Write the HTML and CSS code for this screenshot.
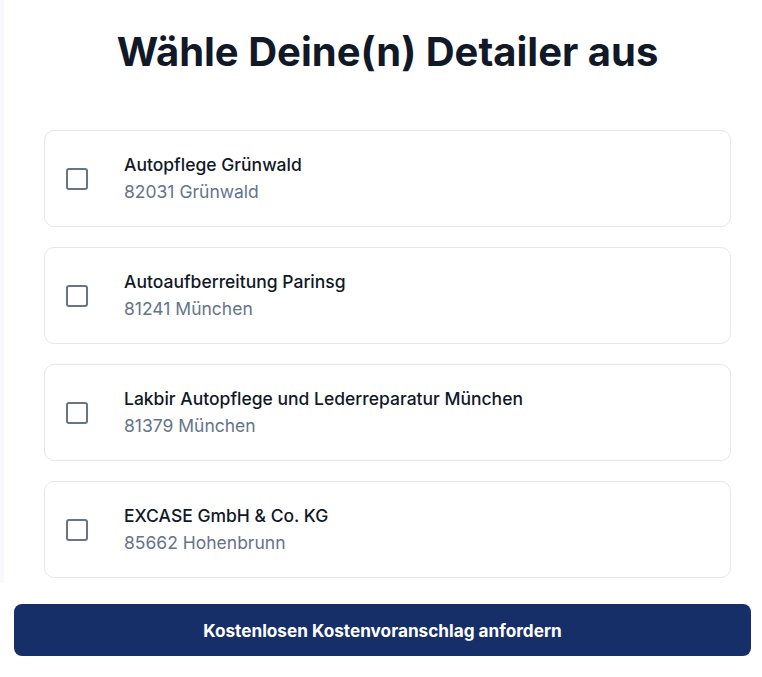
FILE: index.html
```html
<!DOCTYPE html>
<html lang="de">
<head>
<meta charset="utf-8">
<link rel="stylesheet" href="styles.css">
</head>
<body>
<div class="page">
  <div class="scroll">
    <div class="content">
      <h1 class="title">Wähle Deine(n) Detailer aus</h1>
      <div class="list">
        <label class="card">
          <span class="box"></span>
          <span class="info">
            <span class="name">Autopflege Grünwald</span>
            <span class="place">82031 Grünwald</span>
          </span>
        </label>
        <label class="card">
          <span class="box"></span>
          <span class="info">
            <span class="name">Autoaufberreitung Parinsg</span>
            <span class="place">81241 München</span>
          </span>
        </label>
        <label class="card">
          <span class="box"></span>
          <span class="info">
            <span class="name">Lakbir Autopflege und Lederreparatur München</span>
            <span class="place">81379 München</span>
          </span>
        </label>
        <label class="card">
          <span class="box"></span>
          <span class="info">
            <span class="name">EXCASE GmbH &amp; Co. KG</span>
            <span class="place">85662 Hohenbrunn</span>
          </span>
        </label>
      </div>
    </div>
  </div>
  <div class="footer">
    <button class="cta">Kostenlosen Kostenvoranschlag anfordern</button>
  </div>
</div>
</body>
</html>
```
FILE: styles.css
```css
* { box-sizing: border-box; }
html, body {
  margin: 0;
  padding: 0;
  background: #ffffff;
  font-family: Inter, "Noto Sans", sans-serif;
}
.page {
  width: 762px;
  height: 677px;
  display: flex;
  flex-direction: column;
}
.scroll {
  height: 583px;
  border-left: 4px solid #f8f9fc;
  overflow: hidden;
}
.content {
  padding: 0 31px 0 40px;
}
.title {
  margin: 0;
  padding-top: 27px;
  height: 130px;
  font-size: 40px;
  line-height: 50px;
  font-weight: 700;
  color: #111827;
  text-align: center;
}
.list {
  display: flex;
  flex-direction: column;
  gap: 20px;
}
.card {
  display: flex;
  align-items: center;
  height: 97px;
  border: 1px solid #e5e7eb;
  border-radius: 10px;
  padding: 0 21px;
  background: #fff;
}
.box {
  width: 22px;
  height: 22px;
  border: 2px solid #677489;
  border-radius: 3px;
  flex: none;
}
.info {
  display: flex;
  flex-direction: column;
  margin-left: 36px;
}
.name {
  font-size: 17.5px;
  line-height: 24px;
  font-weight: 500;
  color: #111827;
}
.place {
  margin-top: 3px;
  font-size: 17.5px;
  line-height: 24px;
  color: #64748b;
}
.footer {
  padding: 21px 11px 0 14px;
}
.cta {
  width: 100%;
  height: 52px;
  border: none;
  border-radius: 8px;
  background: #172f69;
  color: #fff;
  font-family: Inter, "Noto Sans", sans-serif;
  font-size: 17.2px;
  font-weight: 700;
}
```
